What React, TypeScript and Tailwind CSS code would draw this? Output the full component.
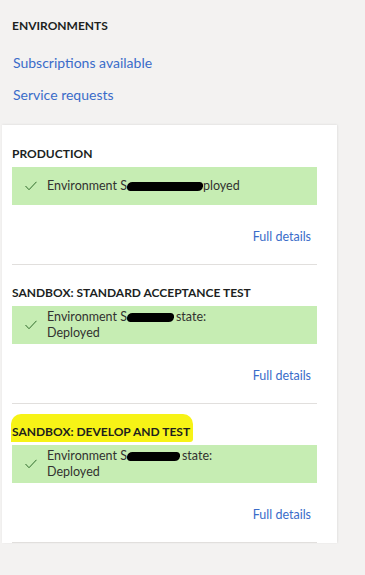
import React from 'react';

const FONT = { fontFamily: 'Lato, "Open Sans", "Liberation Sans", sans-serif' };

// Black marker strokes that hide the environment names in the screenshot
function Redacted({ width }: { width: number }) {
  return (
    <span
      className="inline-block h-[9px] rounded-full bg-black align-middle -skew-x-12"
      style={{ width }}
    />
  );
}

function CheckIcon() {
  return (
    <svg width="12" height="10" viewBox="0 0 12 10" className="shrink-0">
      <polyline points="0.5,5 4,8.7 11.5,0.8" fill="none" stroke="#2f6b2b" strokeWidth="1" />
    </svg>
  );
}

interface EnvSectionProps {
  title: React.ReactNode;
  blob: number;
  wrapped: boolean;
}

function EnvSection({ title, blob, wrapped }: EnvSectionProps) {
  return (
    <div className="border-b border-[#e1dfdd]">
      <h3 className="h-[16px] text-[12px] leading-[16px] font-bold text-[#201f1e]">{title}</h3>
      <div className="mt-[5px] flex h-[38px] items-center gap-[10px] bg-[#c6edb3] pl-[13px] text-[12.5px] leading-[16px] text-[#323130]">
        <CheckIcon />
        {wrapped ? (
          <div>
            <div className="whitespace-nowrap">
              Environment S<Redacted width={blob} />
              <span className="ml-[2px]">state:</span>
            </div>
            <div>Deployed</div>
          </div>
        ) : (
          <div className="whitespace-nowrap">
            Environment S<Redacted width={blob} />ployed
          </div>
        )}
      </div>
      <div className="mt-[23px] mb-[18px] flex justify-end pr-[6px]">
        <a className="text-[12.5px] leading-[18px] text-[#3a6cc9]">Full details</a>
      </div>
    </div>
  );
}

export default function App() {
  return (
    <div className="h-[575px] w-[365px] bg-[#f3f2f1]" style={FONT}>
      <div className="px-[12px] pt-[18px]">
        <h2 className="text-[12px] leading-[16px] font-bold text-[#201f1e]">ENVIRONMENTS</h2>
        <div className="mt-[19px] flex flex-col gap-[12px] pl-[1px]">
          <a className="text-[14px] leading-[20px] text-[#3a6cc9]">Subscriptions available</a>
          <a className="text-[14px] leading-[20px] text-[#3a6cc9]">Service requests</a>
        </div>
      </div>

      <div className="mt-[20px] ml-[2px] w-[335px] bg-white pl-[10px] pr-[20px] pt-[21px] shadow-[0_-1px_2px_rgba(0,0,0,0.04),1px_0_2px_rgba(0,0,0,0.05)]">
        <div className="flex flex-col gap-[20px]">
          <EnvSection title="PRODUCTION" blob={76} wrapped={false} />
          <EnvSection title="SANDBOX: STANDARD ACCEPTANCE TEST" blob={47} wrapped />
          <EnvSection
            title={
              <span className="-ml-[1px] rounded-t-[10px] rounded-br-[3px] bg-[#f7f316] pl-[1px] pr-[3px] pt-[10px] pb-[3px]">
                SANDBOX: DEVELOP AND TEST
              </span>
            }
            blob={53}
            wrapped
          />
        </div>
      </div>
    </div>
  );
}
